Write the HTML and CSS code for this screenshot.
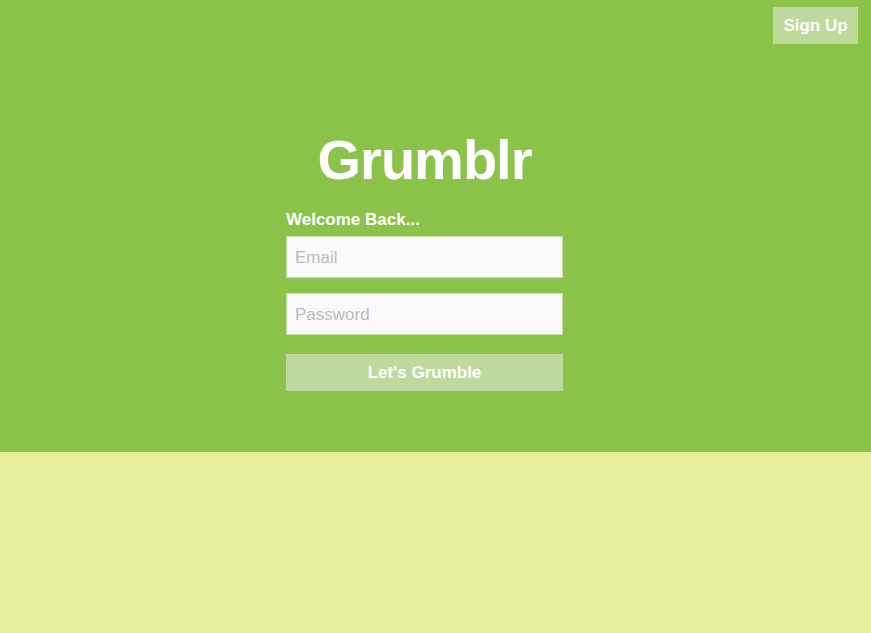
FILE: index.html
```html
<!DOCTYPE html>
<html>
<head>
<meta charset="utf-8">
<title>Grumblr</title>
<link rel="stylesheet" href="styles.css">
</head>
<body>
<section class="hero">
  <header class="topbar">
    <button class="signup">Sign Up</button>
  </header>
  <main class="login">
    <h1 class="brand">Grumblr</h1>
    <form class="form">
      <label class="welcome">Welcome Back...</label>
      <input class="field" type="text" placeholder="Email">
      <input class="field field-pw" type="password" placeholder="Password">
      <button class="submit" type="button">Let's Grumble</button>
    </form>
  </main>
</section>
<section class="below"></section>
</body>
</html>
```
FILE: styles.css
```css
* { box-sizing: border-box; }
html, body { margin: 0; padding: 0; }
body {
  font-family: "Liberation Sans", Arial, sans-serif;
  background: #e6ee9c;
  height: 633px;
  overflow: hidden;
}
.hero {
  background: #8bc34a;
  height: 452px;
  display: flex;
  flex-direction: column;
}
.topbar {
  display: flex;
  justify-content: flex-end;
  padding: 7px 13px 0 0;
}
.signup {
  width: 85px;
  height: 37px;
  border: none;
  background: #bdd99c;
  color: #fff;
  font-family: inherit;
  font-weight: bold;
  font-size: 17px;
  padding: 0;
}
.login {
  display: flex;
  flex-direction: column;
  align-items: center;
  padding-right: 22px;
  margin-top: 88px;
}
.brand {
  margin: 0;
  font-size: 56px;
  line-height: 56px;
  letter-spacing: -1px;
  font-weight: bold;
  color: #fff;
}
.form {
  width: 277px;
  display: flex;
  flex-direction: column;
  margin-top: 22px;
}
.welcome {
  color: #fff;
  font-weight: bold;
  font-size: 17px;
  line-height: 19px;
}
.field {
  margin-top: 7px;
  height: 42px;
  border: 1px solid #c5e1a5;
  background: #fafafa;
  font-family: inherit;
  font-size: 17px;
  padding: 2px 8px 0;
  color: #555;
  outline: none;
}
.field::placeholder { color: #bfbbbb; }
.field-pw { margin-top: 15px; }
.submit {
  margin-top: 19px;
  height: 37px;
  border: none;
  background: #bdd99c;
  color: #fff;
  font-family: inherit;
  font-weight: bold;
  font-size: 17px;
  padding: 0;
}
.below { height: 181px; }
```
